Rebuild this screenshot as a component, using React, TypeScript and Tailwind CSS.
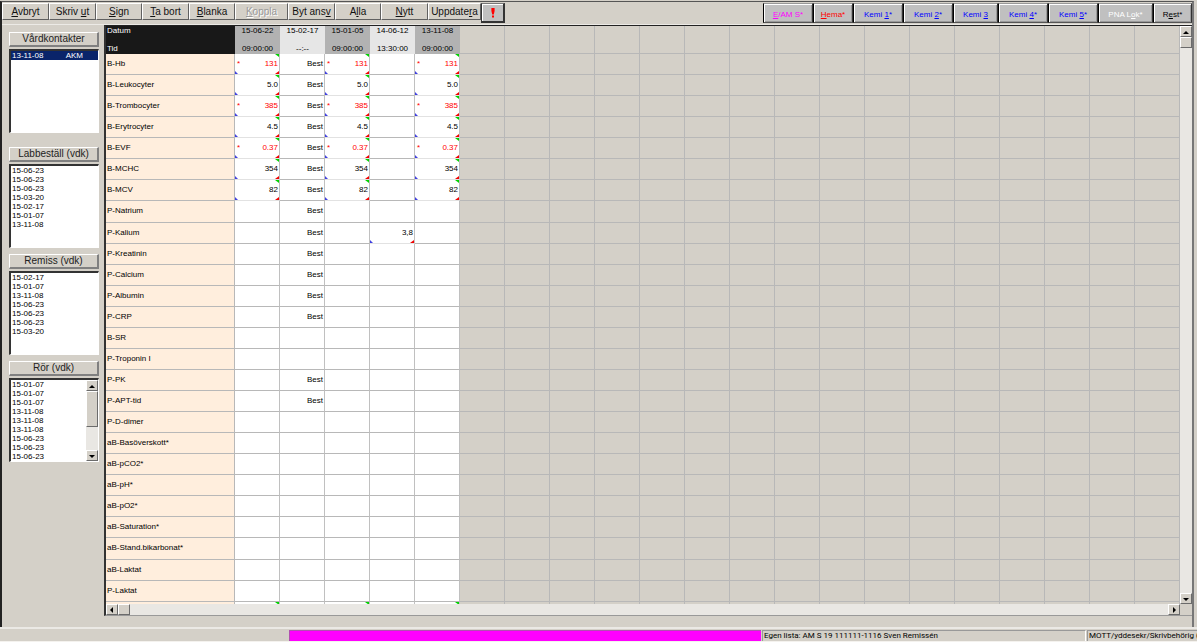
type ToolButton = { pre: string; key: string; post: string; width: string; disabled?: boolean };
type TabButton = { pre: string; key: string; post: string; width: string; color: string };
type Cell = { value: string; flagged?: boolean; marks?: boolean };
type Direction = "up" | "down" | "left" | "right";

const tools: ToolButton[] = [
  { pre: "", key: "A", post: "vbryt", width: "w-[47px]" },
  { pre: "Skriv ", key: "u", post: "t", width: "w-[47px]" },
  { pre: "", key: "S", post: "ign", width: "w-[46px]" },
  { pre: "", key: "T", post: "a bort", width: "w-[47px]" },
  { pre: "", key: "B", post: "lanka", width: "w-[46px]" },
  { pre: "", key: "K", post: "oppla", width: "w-[53px]", disabled: true },
  { pre: "Byt ans", key: "v", post: "", width: "w-[47px]" },
  { pre: "A", key: "l", post: "la", width: "w-[46px]" },
  { pre: "", key: "N", post: "ytt", width: "w-[47px]" },
  { pre: "Uppdate", key: "r", post: "a", width: "w-[53px]" },
];

const tabs: TabButton[] = [
  { pre: "", key: "E", post: "/AM S*", width: "w-[50px]", color: "text-[#ff00ff]" },
  { pre: "", key: "H", post: "ema*", width: "w-[40px]", color: "text-[#ff0000]" },
  { pre: "Kemi ", key: "1", post: "*", width: "w-[50px]", color: "text-[#0000ff]" },
  { pre: "Kemi ", key: "2", post: "*", width: "w-[50px]", color: "text-[#0000ff]" },
  { pre: "Kemi ", key: "3", post: "", width: "w-[45px]", color: "text-[#0000ff]" },
  { pre: "Kemi ", key: "4", post: "*", width: "w-[50px]", color: "text-[#0000ff]" },
  { pre: "Kemi ", key: "5", post: "*", width: "w-[50px]", color: "text-[#0000ff]" },
  { pre: "PNA L", key: "o", post: "k*", width: "w-[55px]", color: "text-white" },
  { pre: "R", key: "e", post: "st*", width: "w-[39px]", color: "text-black" },
];

const columns = [
  { date: "15-06-22", time: "09:00:00", shade: "bg-[#b2b2b2]" },
  { date: "15-02-17", time: "--:--", shade: "bg-[#e6e6e6]" },
  { date: "15-01-05", time: "09:00:00", shade: "bg-[#b2b2b2]" },
  { date: "14-06-12", time: "13:30:00", shade: "bg-[#e6e6e6]" },
  { date: "13-11-08", time: "09:00:00", shade: "bg-[#b2b2b2]" },
];

const emptyColumns = Array.from({ length: 16 }, (_, i) => i);

const blank: Cell = { value: "" };
const best: Cell = { value: "Best" };

function measured(value: string, flagged = false): Cell[] {
  const cell: Cell = { value, flagged, marks: true };
  return [cell, best, cell, blank, cell];
}

const ordered: Cell[] = [blank, best, blank, blank, blank];
const none: Cell[] = [blank, blank, blank, blank, blank];

const rows: { name: string; cells: Cell[] }[] = [
  { name: "B-Hb", cells: measured("131", true) },
  { name: "B-Leukocyter", cells: measured("5.0") },
  { name: "B-Trombocyter", cells: measured("385", true) },
  { name: "B-Erytrocyter", cells: measured("4.5") },
  { name: "B-EVF", cells: measured("0.37", true) },
  { name: "B-MCHC", cells: measured("354") },
  { name: "B-MCV", cells: measured("82") },
  { name: "P-Natrium", cells: ordered },
  { name: "P-Kalium", cells: [blank, best, blank, { value: "3,8", marks: true }, blank] },
  { name: "P-Kreatinin", cells: ordered },
  { name: "P-Calcium", cells: ordered },
  { name: "P-Albumin", cells: ordered },
  { name: "P-CRP", cells: ordered },
  { name: "B-SR", cells: none },
  { name: "P-Troponin I", cells: none },
  { name: "P-PK", cells: ordered },
  { name: "P-APT-tid", cells: ordered },
  { name: "P-D-dimer", cells: none },
  { name: "aB-Basöverskott*", cells: none },
  { name: "aB-pCO2*", cells: none },
  { name: "aB-pH*", cells: none },
  { name: "aB-pO2*", cells: none },
  { name: "aB-Saturation*", cells: none },
  { name: "aB-Stand.bikarbonat*", cells: none },
  { name: "aB-Laktat", cells: none },
  { name: "P-Laktat", cells: none },
];

const raised = "border border-t-white border-l-white border-r-[#6b6b6b] border-b-[#6b6b6b] bg-[#d4d0c8]";

function Label({ pre, k, post }: { pre: string; k: string; post: string }) {
  return (
    <span className="whitespace-pre">
      {pre}
      <span className="underline">{k}</span>
      {post}
    </span>
  );
}

function Arrow({ dir }: { dir: Direction }) {
  const points = {
    up: "0,5 3,2 6,5",
    down: "0,2 6,2 3,5",
    left: "4,0 4,6 1,3",
    right: "2,0 2,6 5,3",
  }[dir];
  return (
    <svg viewBox="0 0 6 6" className="block h-[6px] w-[6px]" aria-hidden="true">
      <polygon points={points} fill="#000" />
    </svg>
  );
}

function ScrollButton({ dir }: { dir: Direction }) {
  return (
    <button
      aria-label={dir}
      className={`flex h-[11px] w-[12px] shrink-0 items-center justify-center ${raised}`}
    >
      <Arrow dir={dir} />
    </button>
  );
}

function ListPanel({ id, title, items, selected, scroll }: {
  id: string;
  title: string;
  items: string[];
  selected?: number;
  scroll?: boolean;
}) {
  return (
    <section className="flex flex-col gap-[2px]">
      <button
        id={id}
        className="h-[15px] border border-t-white border-l-white border-r-2 border-r-[#808080] border-b-2 border-b-[#808080] text-center text-[10px] leading-[12px] text-[#222]"
      >
        {title}
      </button>
      <div className="flex h-[84px] overflow-hidden border-t-2 border-l-2 border-r border-b border-t-[#333] border-l-[#333] border-r-white border-b-white bg-white">
        <select
          size={9}
          aria-labelledby={id}
          defaultValue={selected === undefined ? undefined : String(selected)}
          className="block h-full min-w-0 flex-1 appearance-none overflow-hidden bg-white p-0 text-[8px] leading-[9px] text-black outline-none"
        >
          {items.map((item, i) => (
            <option
              key={i}
              value={String(i)}
              className="h-[9px] min-h-0 p-0 pl-[1px] leading-[9px] checked:bg-[#0a246a] checked:bg-[linear-gradient(#0a246a,#0a246a)] checked:text-white"
            >
              {item}
            </option>
          ))}
        </select>
        {scroll && (
          <div className="flex w-[12px] flex-col bg-[#e9e7e3]">
            <ScrollButton dir="up" />
            <div className={`h-[36px] ${raised}`} />
            <div className="flex-1" />
            <ScrollButton dir="down" />
          </div>
        )}
      </div>
    </section>
  );
}

function Marks() {
  return (
    <>
      <svg viewBox="0 0 3 3" className="absolute bottom-0 left-0 h-[3px] w-[3px]" aria-hidden="true">
        <polygon points="0,0 3,3 0,3" fill="#4040e0" />
      </svg>
      <svg viewBox="0 0 4 3" className="absolute right-0 bottom-0 h-[3px] w-[4px]" aria-hidden="true">
        <polygon points="4,0 4,3 0,3" fill="#f00000" />
      </svg>
    </>
  );
}

function GreenMark() {
  return (
    <svg viewBox="0 0 4 3" className="absolute top-0 right-0 h-[3px] w-[4px]" aria-hidden="true">
      <polygon points="0,0 4,0 4,3" fill="#00d000" />
    </svg>
  );
}

function ResultTable() {
  return (
    <table className="h-full w-full table-fixed border-separate border-spacing-0 text-[8px] leading-[10px]">
      <colgroup>
        <col className="w-[129px]" />
        {columns.map((c) => (
          <col key={c.date} className="w-[45px]" />
        ))}
        {emptyColumns.map((i) => (
          <col key={i} className="w-[45px]" />
        ))}
        <col />
      </colgroup>
      <thead>
        <tr className="h-[28px]">
          <th scope="col" className="bg-[#181818] p-0 text-left align-top font-normal text-white">
            <div className="flex h-[28px] flex-col justify-between pl-[1px]">
              <span>Datum</span>
              <span>Tid</span>
            </div>
          </th>
          {columns.map((c) => (
            <th key={c.date} scope="col" className={`p-0 align-top font-normal text-black ${c.shade}`}>
              <div className="flex h-[28px] flex-col justify-between">
                <span>{c.date}</span>
                <span>{c.time}</span>
              </div>
            </th>
          ))}
          {emptyColumns.map((i) => (
            <td key={i} className="border-r border-b border-[#b8b8b8] p-0" />
          ))}
          <td className="border-b border-[#b8b8b8] p-0" />
        </tr>
      </thead>
      <tbody>
        {rows.map((row) => (
          <tr key={row.name}>
            <th
              scope="row"
              className="border-r border-b border-[#b8b8b8] bg-[#ffeedd] p-0 pl-[1px] text-left font-normal text-black"
            >
              {row.name}
            </th>
            {row.cells.map((cell, i) => (
              <td
                key={i}
                className={`relative border-r border-b border-r-[#c0c0c0] bg-white p-0 text-right ${cell.marks ? "border-b-[#e2e2e2]" : "border-b-[#b8b8b8]"} ${cell.flagged ? "text-[#ff0000]" : "text-black"}`}
              >
                <div className="flex h-[20px] items-center justify-between pr-[1px] pl-[2px]">
                  <span>{cell.flagged ? "*" : ""}</span>
                  <span>{cell.value}</span>
                </div>
                {cell.marks && <Marks />}
                {cell.marks && i !== 3 && <GreenMark />}
              </td>
            ))}
            {emptyColumns.map((i) => (
              <td key={i} className="border-r border-b border-[#b8b8b8] p-0" />
            ))}
            <td className="border-b border-[#b8b8b8] p-0" />
          </tr>
        ))}
        <tr className="h-[2px]">
          <td className="border-r border-[#b8b8b8] bg-[#ffeedd] p-0" />
          {columns.map((c, i) => (
            <td key={c.date} className="relative border-r border-[#c0c0c0] bg-white p-0">
              {i % 2 === 0 && <GreenMark />}
            </td>
          ))}
          {emptyColumns.map((i) => (
            <td key={i} className="border-r border-[#b8b8b8] p-0" />
          ))}
          <td className="p-0" />
        </tr>
      </tbody>
    </table>
  );
}

export default function App() {
  return (
    <div className="flex h-screen flex-col overflow-hidden bg-[#d4d0c8] font-['Liberation_Sans',Arial,sans-serif] text-black">
      <div className="flex min-h-0 flex-1 border-t border-[#d4d0c8] pr-[3px]">
        <div className="flex min-w-0 flex-1 flex-col border-t border-r-2 border-l-2 border-t-[#555] border-r-[#777] border-l-[#222]">
          <header className="flex h-[23px] shrink-0 items-start justify-between border-b border-[#eceae6] pt-[1px]">
            <div className="flex">
              {tools.map((t) => (
                <button
                  key={t.pre + t.key + t.post}
                  disabled={t.disabled}
                  className={`flex h-[17px] items-center justify-center border border-t-white border-l-white border-r-[#606060] border-b-[#606060] text-[10px] leading-[12px] ${t.width} ${t.disabled ? "text-[#999] [text-shadow:1px_1px_0_#fff]" : "text-[#111]"}`}
                >
                  <Label pre={t.pre} k={t.key} post={t.post} />
                </button>
              ))}
              <button
                aria-label="Akut"
                className="flex h-[20px] w-[24px] items-center justify-center border border-r-2 border-b-2 border-t-[#777] border-r-[#333] border-b-[#333] border-l-[#333] bg-[#c0c0c0] shadow-[inset_1px_1px_0_#fff]"
              >
                <svg viewBox="0 0 4 10" className="h-[10px] w-[4px]" aria-hidden="true">
                  <path d="M0.4 0 H3.6 V3 L2.8 6.5 H1.2 L0.4 3 Z M1 7.5 H3 V9.6 H1 Z" fill="#f00" />
                </svg>
              </button>
            </div>
            <nav className="flex">
              {tabs.map((t) => (
                <button
                  key={t.pre + t.key + t.post}
                  className={`flex h-[20px] items-center justify-center border border-t-[#999] border-r-[#333] border-b-[#555] border-l-black bg-[#c0c0c0] pt-[3px] text-[8px] leading-[10px] shadow-[inset_1px_1px_0_#fff,inset_-1px_-1px_0_#999] ${t.width} ${t.color}`}
                >
                  <Label pre={t.pre} k={t.key} post={t.post} />
                </button>
              ))}
            </nav>
          </header>
          <div className="flex min-h-0 flex-1">
            <aside className="flex w-[102px] shrink-0 flex-col gap-[6px] pt-[7px] pr-[5px] pl-[7px]">
              <div className="pb-2">
                <ListPanel
                  id="vardkontakter"
                  title="Vårdkontakter"
                  items={["13-11-08" + "\u00a0".repeat(10) + "AKM"]}
                  selected={0}
                />
              </div>
              <ListPanel
                id="labbestall"
                title="Labbeställ (vdk)"
                items={["15-06-23", "15-06-23", "15-06-23", "15-03-20", "15-02-17", "15-01-07", "13-11-08"]}
              />
              <ListPanel
                id="remiss"
                title="Remiss (vdk)"
                items={["15-02-17", "15-01-07", "13-11-08", "15-06-23", "15-06-23", "15-06-23", "15-03-20"]}
              />
              <ListPanel
                id="ror"
                title="Rör (vdk)"
                items={["15-01-07", "15-01-07", "15-01-07", "13-11-08", "13-11-08", "13-11-08", "15-06-23", "15-06-23", "15-06-23"]}
                scroll
              />
            </aside>
            <main className="mb-[11px] flex min-w-0 flex-1 flex-col border-t border-b border-l-2 border-t-[#222] border-b-[#999] border-l-[#333]">
              <div className="flex min-h-0 flex-1">
                <div className="min-w-0 flex-1 overflow-hidden">
                  <ResultTable />
                </div>
                <div className="flex w-[12px] shrink-0 flex-col bg-[#e9e7e3]">
                  <ScrollButton dir="up" />
                  <div className={`h-[11px] ${raised}`} />
                  <div className="flex-1" />
                  <ScrollButton dir="down" />
                </div>
              </div>
              <div className="flex h-[11px] shrink-0">
                <div className="flex flex-1 bg-[#e9e7e3]">
                  <ScrollButton dir="left" />
                  <div className={`w-[12px] ${raised}`} />
                  <div className="flex-1" />
                  <ScrollButton dir="right" />
                </div>
                <div className="w-[12px] bg-[#d4d0c8]" />
              </div>
            </main>
          </div>
        </div>
      </div>
      <footer className="flex h-[15px] shrink-0 border-t-2 border-b border-t-[#ebe9e5] border-b-[#f4f2ee] pt-[1px] font-[Roboto,'Liberation_Sans',sans-serif] text-[8px] leading-[10px]">
        <div className="w-[289px] shrink-0" />
        <div className="mr-[1px] min-w-0 flex-1 border-t border-l border-[#b050b0] bg-[#ff00ff]" />
        <div className="w-[324px] shrink-0 border-t border-r border-l border-t-[#999] border-r-white border-l-[#999] pl-[1px] whitespace-nowrap">
          Egen lista: AM S 19 111111-1116 Sven Remissén
        </div>
        <div className="ml-[1px] w-[110px] shrink-0 border-t border-l border-[#999] pl-[1px] whitespace-nowrap">
          MOTT/yddesekr/Skrivbehörig (Y
        </div>
      </footer>
    </div>
  );
}
